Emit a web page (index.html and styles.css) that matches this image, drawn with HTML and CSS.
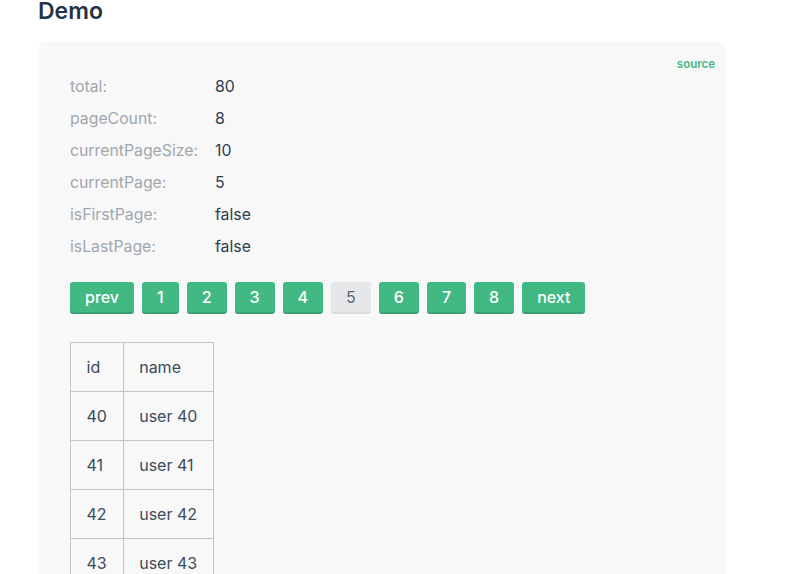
FILE: index.html
```html
<!DOCTYPE html>
<html>
<head>
<meta charset="utf-8">
<link rel="stylesheet" href="styles.css">
</head>
<body>
<div class="page">
  <h2 class="title">Demo</h2>
  <div class="card">
    <a class="source" href="#">source</a>
    <div class="info">
      <div class="row"><span class="label">total:</span><span class="value">80</span></div>
      <div class="row"><span class="label">pageCount:</span><span class="value">8</span></div>
      <div class="row"><span class="label">currentPageSize:</span><span class="value">10</span></div>
      <div class="row"><span class="label">currentPage:</span><span class="value">5</span></div>
      <div class="row"><span class="label">isFirstPage:</span><span class="value">false</span></div>
      <div class="row"><span class="label">isLastPage:</span><span class="value">false</span></div>
    </div>
    <div class="pager">
      <button class="btn">prev</button>
      <button class="btn">1</button>
      <button class="btn">2</button>
      <button class="btn">3</button>
      <button class="btn">4</button>
      <button class="btn btn-disabled">5</button>
      <button class="btn">6</button>
      <button class="btn">7</button>
      <button class="btn">8</button>
      <button class="btn">next</button>
    </div>
    <table class="tbl">
      <tr><td>id</td><td>name</td></tr>
      <tr><td>40</td><td>user 40</td></tr>
      <tr><td>41</td><td>user 41</td></tr>
      <tr><td>42</td><td>user 42</td></tr>
      <tr><td>43</td><td>user 43</td></tr>
      <tr><td>44</td><td>user 44</td></tr>
    </table>
  </div>
</div>
</body>
</html>
```

FILE: styles.css
```css
html, body {
  margin: 0;
  padding: 0;
  background: #ffffff;
  font-family: Inter, "Noto Sans", sans-serif;
  color: #2c3e50;
  overflow: hidden;
}
.page {
  padding: 0 78px 0 38px;
}
.title {
  margin: 0;
  font-size: 23px;
  line-height: 22px;
  font-weight: 600;
  color: #243447;
  height: 42px;
}
.card {
  position: relative;
  background: #f8f8f8;
  border-radius: 8px;
  padding: 28px 32px 40px;
  width: 624px;
}
.source {
  position: absolute;
  top: 15px;
  right: 11px;
  font-size: 11.5px;
  font-weight: 600;
  color: #42b983;
  text-decoration: none;
  line-height: 14px;
}
.info {
  display: flex;
  flex-direction: column;
}
.row {
  display: flex;
  height: 32px;
  align-items: center;
  font-size: 15.8px;
}
.label {
  width: 145px;
  flex: none;
  color: #a0a7ae;
}
.value {
  color: #2c3e50;
}
.pager {
  display: flex;
  gap: 8px;
  margin-top: 20px;
}
.btn {
  font-family: Inter, "Noto Sans", sans-serif;
  font-size: 16px;
  font-weight: 500;
  color: #ffffff;
  background: #42b983;
  border: none;
  border-bottom: 2px solid #38a271;
  border-radius: 3px;
  height: 32px;
  padding: 0 15px;
  line-height: 30px;
}
.btn-disabled {
  background: #e6e7e8;
  border-bottom-color: #dcdddf;
  color: #5b6674;
  font-weight: 400;
}
.tbl {
  margin-top: 28px;
  border-collapse: collapse;
  font-size: 16px;
  color: #3a4b5c;
}
.tbl td {
  border: 1px solid #c4c4c4;
  height: 49px;
  padding: 0 15.5px;
  box-sizing: border-box;
}
```
